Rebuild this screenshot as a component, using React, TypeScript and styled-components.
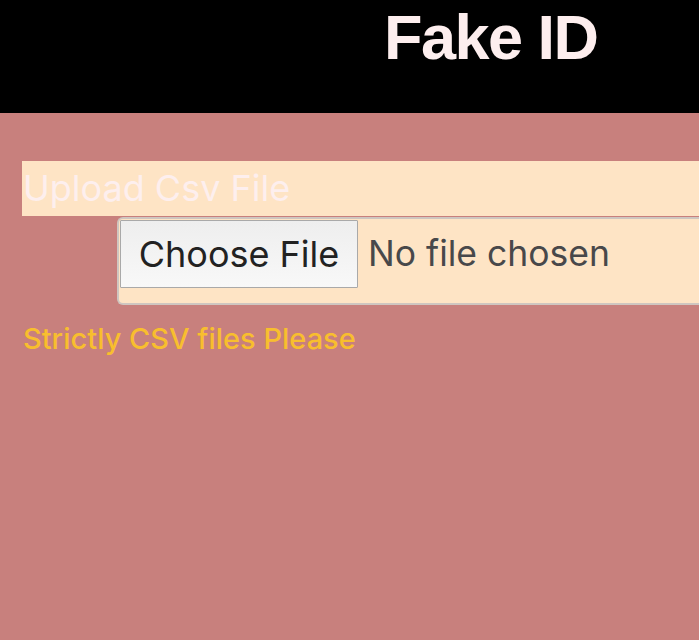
import React from "react";
import styled, { createGlobalStyle } from "styled-components";

const Global = createGlobalStyle`
  html, body { margin: 0; padding: 0; }
  body {
    background: #c8807d;
    font-family: Inter, "Liberation Sans", Arial, sans-serif;
    overflow: hidden;
  }
`;

const Header = styled.header`
  background: #000;
  height: 113px;
  box-sizing: border-box;
  padding: 0 0 0 384px;
`;

const Title = styled.h1`
  margin: 0;
  padding-top: 2px;
  font-family: "Liberation Sans", Arial, sans-serif;
  font-size: 63px;
  line-height: 70px;
  font-weight: 700;
  letter-spacing: -1.5px;
  color: #fdeeee;
`;

const Main = styled.main`
  padding: 48px 0 0 22px;
  display: flex;
  flex-direction: column;
  align-items: stretch;
`;

const Label = styled.div`
  background: #fee4c5;
  color: #fdefee;
  font-size: 36px;
  line-height: 55px;
  height: 55px;
  padding-left: 1px;
  white-space: nowrap;
`;

const FileBox = styled.div`
  margin: 1px 0 0 95px;
  height: 88px;
  box-sizing: border-box;
  background: #fee4c5;
  border: 2px solid #cfc6c0;
  border-right: none;
  border-radius: 6px 0 0 6px;
  padding: 1px 0 0 1px;
  display: flex;
  align-items: flex-start;
  gap: 10px;
`;

const ChooseButton = styled.button`
  width: 238px;
  height: 68px;
  box-sizing: border-box;
  border: 1.5px solid #a9a9a9;
  border-radius: 1px;
  background: linear-gradient(#eeeeee, #f8f8f8);
  font-family: Inter, "Liberation Sans", Arial, sans-serif;
  font-size: 36px;
  color: #222;
  padding: 0;
  cursor: pointer;
`;

const NoFile = styled.span`
  font-size: 35.5px;
  line-height: 68px;
  color: #48484a;
  white-space: nowrap;
`;

const Hint = styled.p`
  margin: 16px 0 0 1px;
  font-size: 29px;
  line-height: 36px;
  font-weight: 500;
  color: #f8be2e;
`;

export default function App() {
  return (
    <>
      <Global />
      <Header>
        <Title>Fake ID</Title>
      </Header>
      <Main>
        <Label>Upload Csv File</Label>
        <FileBox>
          <ChooseButton type="button">Choose File</ChooseButton>
          <NoFile>No file chosen</NoFile>
        </FileBox>
        <Hint>Strictly CSV files Please</Hint>
      </Main>
    </>
  );
}
